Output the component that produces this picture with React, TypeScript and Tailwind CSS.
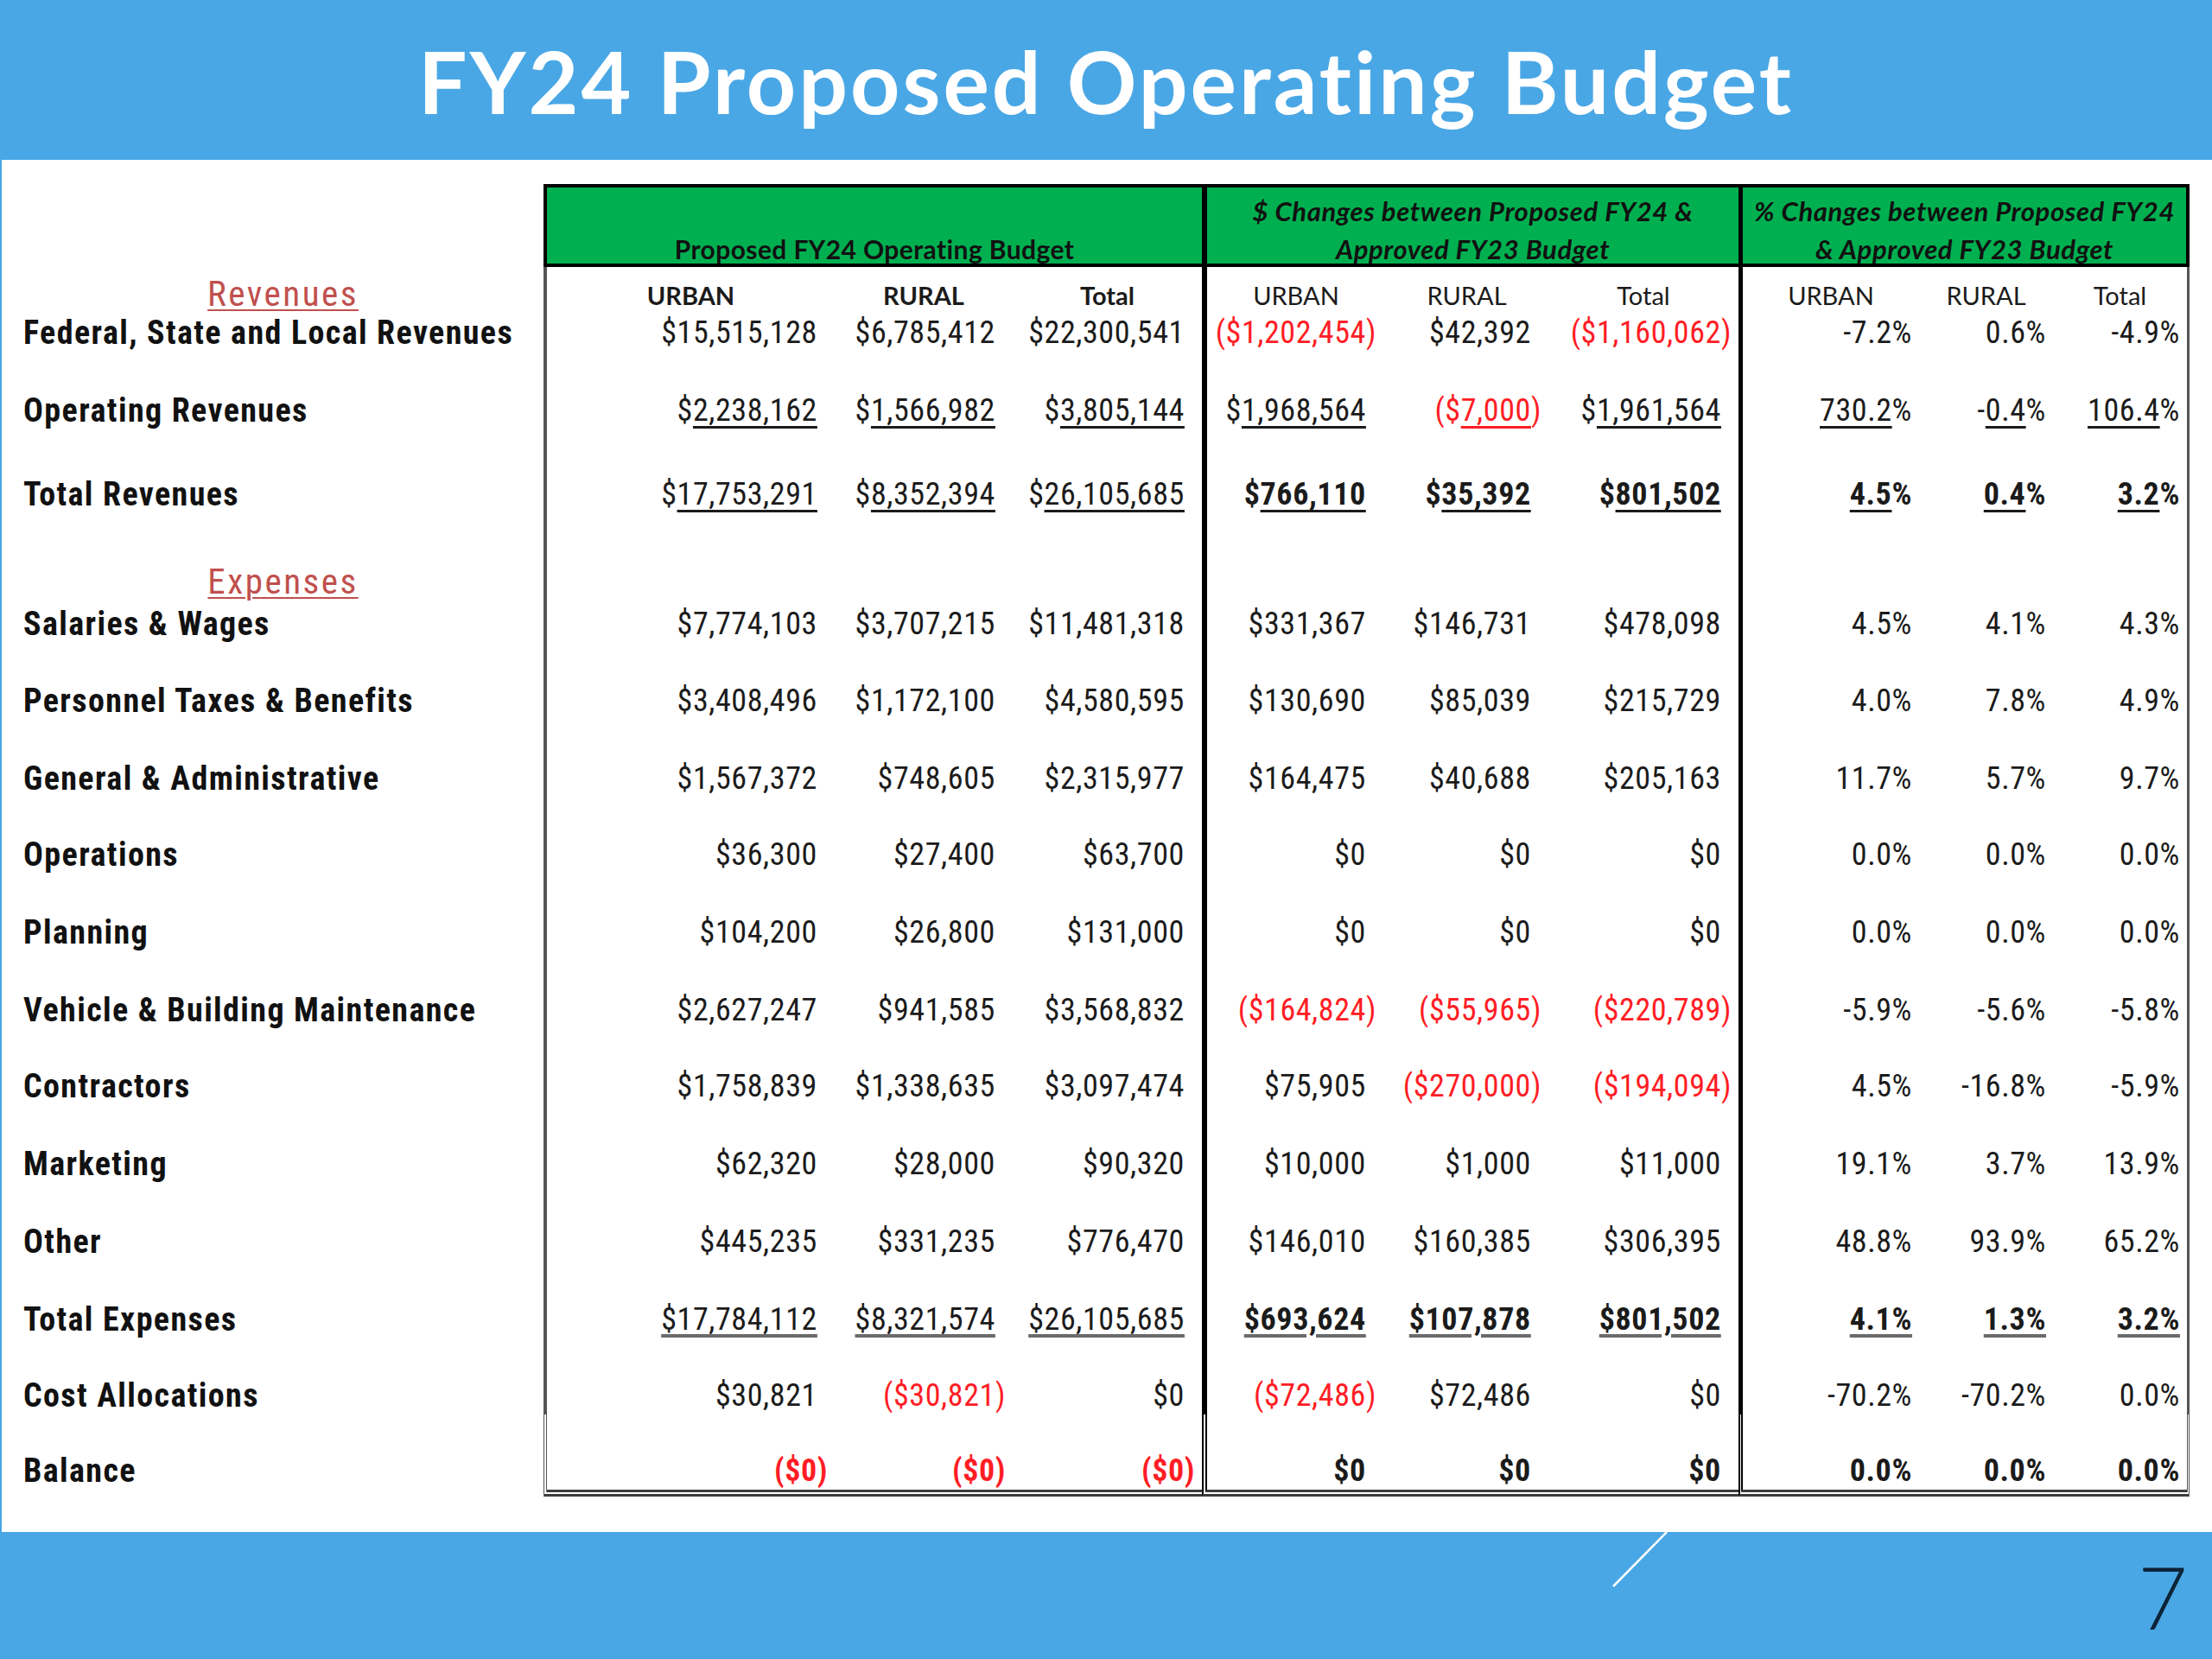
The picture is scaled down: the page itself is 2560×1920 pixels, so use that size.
import React from "react";

const NARROW =
  "font-['Liberation_Sans_Narrow','Arial_Narrow','Roboto_Condensed','Liberation_Sans',sans-serif]";
const HUMAN = "font-['Lato','Liberation_Sans',sans-serif]";

const SEC_A = "flex w-[762px] border-l-4 border-l-[#555]";
const SEC_B = "flex w-[621px] border-l-[6px] border-l-black";
const SEC_C = "flex w-[522px] border-l-[5px] border-l-black border-r-[3px] border-r-[#555]";

// column widths + right padding, three per section
const COLS = [
  ["w-[333px]", "pr-[8px]"],
  ["w-[206px]", "pr-[8px]"],
  ["w-[219px]", "pr-[8px]"],
  ["w-[206px]", "pr-[10px]"],
  ["w-[189px]", "pr-[8px]"],
  ["w-[220px]", "pr-[8px]"],
  ["w-[204px]", "pr-[8px]"],
  ["w-[155px]", "pr-[8px]"],
  ["flex-1", "pr-[8px]"],
];

type Kind = "plain" | "under" | "totrev" | "totexp" | "balance";

type Row = {
  label: string;
  h: string;
  kind?: Kind;
  v: string[];
};

const REVENUES: Row[] = [
  {
    label: "Federal, State and Local Revenues",
    h: "h-[42px]",
    v: ["$15,515,128", "$6,785,412", "$22,300,541", "($1,202,454)", "$42,392", "($1,160,062)", "-7.2%", "0.6%", "-4.9%"],
  },
  {
    label: "Operating Revenues",
    h: "h-[90px]",
    kind: "under",
    v: ["$2,238,162", "$1,566,982", "$3,805,144", "$1,968,564", "($7,000)", "$1,961,564", "730.2%", "-0.4%", "106.4%"],
  },
  {
    label: "Total Revenues",
    h: "h-[97px]",
    kind: "totrev",
    v: ["$17,753,291", "$8,352,394", "$26,105,685", "$766,110", "$35,392", "$801,502", "4.5%", "0.4%", "3.2%"],
  },
];

const EXPENSES: Row[] = [
  {
    label: "Salaries & Wages",
    h: "h-[48px]",
    v: ["$7,774,103", "$3,707,215", "$11,481,318", "$331,367", "$146,731", "$478,098", "4.5%", "4.1%", "4.3%"],
  },
  {
    label: "Personnel Taxes & Benefits",
    h: "h-[89px]",
    v: ["$3,408,496", "$1,172,100", "$4,580,595", "$130,690", "$85,039", "$215,729", "4.0%", "7.8%", "4.9%"],
  },
  {
    label: "General & Administrative",
    h: "h-[90px]",
    v: ["$1,567,372", "$748,605", "$2,315,977", "$164,475", "$40,688", "$205,163", "11.7%", "5.7%", "9.7%"],
  },
  {
    label: "Operations",
    h: "h-[88px]",
    v: ["$36,300", "$27,400", "$63,700", "$0", "$0", "$0", "0.0%", "0.0%", "0.0%"],
  },
  {
    label: "Planning",
    h: "h-[90px]",
    v: ["$104,200", "$26,800", "$131,000", "$0", "$0", "$0", "0.0%", "0.0%", "0.0%"],
  },
  {
    label: "Vehicle & Building Maintenance",
    h: "h-[90px]",
    v: ["$2,627,247", "$941,585", "$3,568,832", "($164,824)", "($55,965)", "($220,789)", "-5.9%", "-5.6%", "-5.8%"],
  },
  {
    label: "Contractors",
    h: "h-[88px]",
    v: ["$1,758,839", "$1,338,635", "$3,097,474", "$75,905", "($270,000)", "($194,094)", "4.5%", "-16.8%", "-5.9%"],
  },
  {
    label: "Marketing",
    h: "h-[90px]",
    v: ["$62,320", "$28,000", "$90,320", "$10,000", "$1,000", "$11,000", "19.1%", "3.7%", "13.9%"],
  },
  {
    label: "Other",
    h: "h-[90px]",
    v: ["$445,235", "$331,235", "$776,470", "$146,010", "$160,385", "$306,395", "48.8%", "93.9%", "65.2%"],
  },
  {
    label: "Total Expenses",
    h: "h-[90px]",
    kind: "totexp",
    v: ["$17,784,112", "$8,321,574", "$26,105,685", "$693,624", "$107,878", "$801,502", "4.1%", "1.3%", "3.2%"],
  },
  {
    label: "Cost Allocations",
    h: "h-[88px]",
    v: ["$30,821", "($30,821)", "$0", "($72,486)", "$72,486", "$0", "-70.2%", "-70.2%", "0.0%"],
  },
];

const BALANCE: Row = {
  label: "Balance",
  h: "h-[95px]",
  kind: "balance",
  v: ["($0)", "($0)", "($0)", "$0", "$0", "$0", "0.0%", "0.0%", "0.0%"],
};

function NumCell({ v, idx, kind }: { v: string; idx: number; kind: Kind }) {
  const [w, pr] = COLS[idx];
  const neg = v.startsWith("(");
  const money = idx < 6;
  const bold = kind === "balance" || ((kind === "totrev" || kind === "totexp") && idx >= 3);
  const m = v.match(/^([(\-]?\$?)(.*?)([%)]?)$/) || ["", "", v, ""];
  const [, pre, core, post] = m;

  let body: React.ReactNode;
  if (kind === "totexp") {
    body = (
      <span className="underline decoration-[4px] decoration-[#6b6b6b] underline-offset-[5px]">{v}</span>
    );
  } else if (kind === "under" || kind === "totrev") {
    body = (
      <>
        {pre}
        <span className="underline decoration-[3px] underline-offset-[6px]">{core}</span>
        {post}
      </>
    );
  } else {
    body = v;
  }

  return (
    <div className={`${w} ${pr} flex items-end justify-end pb-[2px]`}>
      <span
        className={`${NARROW} text-[36px] leading-[40px] tracking-[0.6px] whitespace-nowrap ${
          neg ? "text-[#ff1d25]" : "text-[#1b1b1b]"
        } ${bold ? "font-bold" : "font-normal"}`}
      >
        {body}
        {money && !neg && <span className="invisible">)</span>}
      </span>
    </div>
  );
}

function DataRow({ row }: { row: Row }) {
  const kind = row.kind ?? "plain";
  const last = kind === "balance";
  const bottom = last ? "border-b-8 border-double border-b-[#3c3c3c]" : "";
  return (
    <div className={`flex ${row.h}`}>
      <div
        className={`w-[627px] pl-[25px] flex items-end pb-[2px] ${last ? "border-b-8 border-transparent" : ""}`}
      >
        <span
          className={`${NARROW} font-bold text-[38px] leading-[40px] tracking-[1.4px] text-[#111] whitespace-nowrap`}
        >
          {row.label}
        </span>
      </div>
      <div className={`${SEC_A} ${bottom}`}>
        {row.v.slice(0, 3).map((v, i) => (
          <NumCell key={i} v={v} idx={i} kind={kind} />
        ))}
      </div>
      <div className={`${SEC_B} ${bottom}`}>
        {row.v.slice(3, 6).map((v, i) => (
          <NumCell key={i} v={v} idx={i + 3} kind={kind} />
        ))}
      </div>
      <div className={`${SEC_C} ${bottom}`}>
        {row.v.slice(6, 9).map((v, i) => (
          <NumCell key={i} v={v} idx={i + 6} kind={kind} />
        ))}
      </div>
    </div>
  );
}

function GroupTitle({ text }: { text: string }) {
  return (
    <span
      className={`${NARROW} text-[41px] leading-[44px] tracking-[2.5px] text-[#c0504d] underline decoration-[2px] underline-offset-[4px]`}
    >
      {text}
    </span>
  );
}

function SectionTitle({ text, h }: { text: string; h: string }) {
  return (
    <div className={`flex ${h}`}>
      <div className="w-[627px] pl-[24px] flex items-end justify-center pb-[1px]">
        <GroupTitle text={text} />
      </div>
      <div className={SEC_A} />
      <div className={SEC_B} />
      <div className={SEC_C} />
    </div>
  );
}

function ColLabel({ idx, text, bold }: { idx: number; text: string; bold?: boolean }) {
  const [w] = COLS[idx];
  return (
    <div className={`${w} flex items-end justify-center pb-[5px]`}>
      <span className={`${HUMAN} text-[29px] leading-[36px] text-[#1b1b1b] ${bold ? "font-bold" : "font-normal"}`}>
        {text}
      </span>
    </div>
  );
}

function HeaderRow() {
  const green = "bg-[#00b050] border-t-4 border-b-4 border-t-black border-b-black";
  const italic = `${HUMAN} font-bold italic text-[31px] leading-[44px] tracking-[0.6px] text-[#111] text-center whitespace-nowrap`;
  return (
    <div className="flex h-[96px]">
      <div className="w-[627px]" />
      <div className={`flex w-[762px] border-l-4 border-l-black ${green} items-end justify-center`}>
        <span className={`${HUMAN} font-bold text-[30px] leading-[34px] tracking-[0.4px] text-[#111]`}>
          Proposed FY24 Operating Budget
        </span>
      </div>
      <div className={`flex flex-col w-[621px] border-l-[6px] border-l-black ${green} pt-[5px]`}>
        <span className={italic}>$ Changes between Proposed FY24 &amp;</span>
        <span className={italic}>Approved FY23 Budget</span>
      </div>
      <div
        className={`flex flex-col w-[522px] border-l-[5px] border-r-4 border-l-black border-r-black ${green} pt-[5px]`}
      >
        <span className={italic}>% Changes between Proposed FY24</span>
        <span className={italic}>&amp; Approved FY23 Budget</span>
      </div>
    </div>
  );
}

function LabelsRow() {
  return (
    <div className="flex h-[56px]">
      <div className="w-[627px] pl-[24px] flex items-end justify-center pb-[3px]">
        <GroupTitle text="Revenues" />
      </div>
      <div className={SEC_A}>
        <ColLabel idx={0} text="URBAN" bold />
        <ColLabel idx={1} text="RURAL" bold />
        <ColLabel idx={2} text="Total" bold />
      </div>
      <div className={SEC_B}>
        <ColLabel idx={3} text="URBAN" />
        <ColLabel idx={4} text="RURAL" />
        <ColLabel idx={5} text="Total" />
      </div>
      <div className={SEC_C}>
        <ColLabel idx={6} text="URBAN" />
        <ColLabel idx={7} text="RURAL" />
        <ColLabel idx={8} text="Total" />
      </div>
    </div>
  );
}

export default function App() {
  return (
    <div className="w-[2560px] h-[1920px] flex flex-col bg-white overflow-hidden [font-variant-ligatures:no-common-ligatures]">
      <header className="h-[185px] shrink-0 bg-[#4aa7e5] flex items-center justify-center">
        <h1 className={`${HUMAN} font-bold text-[100px] leading-none tracking-[3px] text-white`}>
          FY24 Proposed Operating Budget
        </h1>
      </header>

      <main className="flex-1 border-l-2 border-l-[#4aa7e5] bg-white pt-[28px]">
        <HeaderRow />
        <LabelsRow />
        {REVENUES.map((r) => (
          <DataRow key={r.label} row={r} />
        ))}
        <SectionTitle text="Expenses" h="h-[102px]" />
        {EXPENSES.map((r) => (
          <DataRow key={r.label} row={r} />
        ))}
        <DataRow row={BALANCE} />
      </main>

      <footer className="h-[147px] shrink-0 bg-[#4aa7e5] relative flex items-center justify-end pr-[28px]">
        <svg className="absolute left-[1860px] top-0" width="80" height="70" viewBox="0 0 80 70">
          <line x1="69" y1="0" x2="7" y2="63" stroke="white" strokeWidth="2.5" />
        </svg>
        <span className={`${HUMAN} font-light text-[100px] leading-none text-[#0c2438]`}>7</span>
      </footer>
    </div>
  );
}
